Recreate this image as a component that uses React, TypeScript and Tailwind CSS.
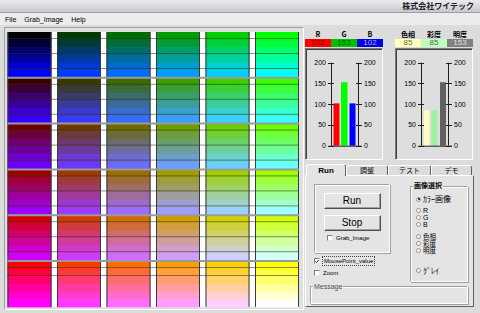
import React from "react";

const LAT = '"Liberation Sans", "Noto Sans CJK JP", sans-serif';
const JP = '"Noto Sans CJK JP", "Liberation Sans", sans-serif';

const L = [0, 58, 108, 158, 208, 255];

function ColorGrid() {
  const cellW = 44;
  const px = 49.5;
  const x0 = 2.5;
  const y0 = 4;
  const rh = 45.8;
  const bh = rh / 6;
  const gridRight = x0 + 5 * px + cellW;
  const rects: React.ReactNode[] = [];
  for (let c = 0; c < 5; c++) {
    rects.push(
      <rect key={`g${c}`} x={x0 + c * px + cellW} y={y0} width={px - cellW} height={rh * 6} fill="#ffffff" />
    );
  }
  for (let r = 0; r < 6; r++) {
    for (let c = 0; c < 6; c++) {
      for (let b = 0; b < 6; b++) {
        rects.push(
          <rect
            key={`c${r}-${c}-${b}`}
            x={x0 + c * px}
            y={y0 + r * rh + b * bh}
            width={cellW}
            height={bh + 0.6}
            fill={`rgb(${L[r]},${L[c]},${L[b]})`}
          />
        );
      }
    }
  }
  const lines: React.ReactNode[] = [];
  for (let c = 0; c < 6; c++) {
    lines.push(
      <line key={`vl${c}`} x1={x0 + c * px + 0.5} x2={x0 + c * px + 0.5} y1={y0} y2={y0 + rh * 6} stroke="#3a3a3a" strokeWidth={1} />
    );
    lines.push(
      <line key={`vr${c}`} x1={x0 + c * px + cellW - 0.5} x2={x0 + c * px + cellW - 0.5} y1={y0} y2={y0 + rh * 6} stroke="#3a3a3a" strokeWidth={1} />
    );
  }
  for (let r = 0; r < 6; r++) {
    const offs = r === 5 ? [6.5, 14.5] : [6.5, 21.5, 36.5];
    offs.forEach((o, i) => {
      lines.push(
        <line key={`s${r}-${i}`} x1={x0} x2={gridRight} y1={y0 + r * rh + o} y2={y0 + r * rh + o} stroke="rgba(50,50,50,0.55)" strokeWidth={1} />
      );
    });
    if (r > 0) {
      lines.push(
        <line key={`rd${r}`} x1={x0} x2={gridRight} y1={y0 + r * rh} y2={y0 + r * rh} stroke="#9a9a9a" strokeWidth={2} />
      );
    }
  }
  return (
    <svg width={298} height={281} className="block">
      {rects}
      {lines}
    </svg>
  );
}

type Bar = { x: number; w: number; v: number; color: string };

function Chart({ bars }: { bars: Bar[] }) {
  const y = (v: number) => 96.7 - v * 0.415;
  const levels = [0, 50, 100, 150, 200];
  return (
    <svg width={76} height={110} className="block">
      {bars.map((b, i) => (
        <rect key={i} x={b.x} y={y(b.v)} width={b.w} height={y(0) - y(b.v)} fill={b.color} />
      ))}
      <line x1={25.5} x2={25.5} y1={y(200)} y2={y(0)} stroke="#202020" />
      <line x1={52.5} x2={52.5} y1={y(200)} y2={y(0)} stroke="#202020" />
      <line x1={23} x2={56} y1={y(0) + 0.5} y2={y(0) + 0.5} stroke="#202020" />
      {levels.map((v) => (
        <g key={v}>
          <line x1={22} x2={28} y1={Math.round(y(v)) + 0.5} y2={Math.round(y(v)) + 0.5} stroke="#202020" />
          <line x1={50} x2={56} y1={Math.round(y(v)) + 0.5} y2={Math.round(y(v)) + 0.5} stroke="#202020" />
          <text x={20} y={y(v) + 2.5} fontSize={7} textAnchor="end" fill="#000" style={{ fontFamily: LAT }}>
            {v}
          </text>
          <text x={58} y={y(v) + 2.5} fontSize={7} fill="#000" style={{ fontFamily: LAT }}>
            {v}
          </text>
        </g>
      ))}
    </svg>
  );
}

function ValuePanel({
  labels,
  boxes,
  bars,
}: {
  labels: string[];
  boxes: { bg: string; fg: string; text: string }[];
  bars: Bar[];
}) {
  return (
    <div className="flex flex-col w-[78px]">
      <div className="flex h-[10px] items-center">
        {labels.map((l) => (
          <div key={l} className="flex-1 text-center text-[7px] font-bold leading-none text-black" style={{ fontFamily: JP }}>
            {l}
          </div>
        ))}
      </div>
      <div className="flex h-[8px]">
        {boxes.map((b, i) => (
          <div
            key={i}
            className="flex-1 flex items-center justify-center text-[8px] leading-none"
            style={{ backgroundColor: b.bg, color: b.fg, fontFamily: LAT }}
          >
            {b.text}
          </div>
        ))}
      </div>
      <div className="mt-[1px] h-[112px] border border-t-[#7a7a7a] border-l-[#7a7a7a] border-r-[#ffffff] border-b-[#ffffff] bg-[#dedede] shadow-[inset_1px_1px_0_#404040]">
        <Chart bars={bars} />
      </div>
    </div>
  );
}

function Check({ checked, label, focus }: { checked?: boolean; label: string; focus?: boolean }) {
  return (
    <div className="flex items-center h-[10px]">
      <div className="w-[6px] h-[6px] bg-white border border-t-[#808080] border-l-[#808080] border-r-[#e8e8e8] border-b-[#e8e8e8] flex items-center justify-center">
        {checked && (
          <svg width={5} height={5} viewBox="0 0 5 5" className="block">
            <path d="M0.5 2.3 L2 3.8 L4.6 0.8" stroke="#000" strokeWidth={1.1} fill="none" />
          </svg>
        )}
      </div>
      <span
        className={`ml-[2px] text-[6px] leading-none text-black px-[1px] py-[1px] ${focus ? "border border-dotted border-[#404040]" : ""}`}
        style={{ fontFamily: LAT }}
      >
        {label}
      </span>
    </div>
  );
}

function Radio({ checked, label, jp, h, size }: { checked?: boolean; label: string; jp?: boolean; h: string; size?: string }) {
  return (
    <div className={`flex items-center ${h}`}>
      <div className="w-[5px] h-[5px] rounded-full bg-white border border-[#909090] flex items-center justify-center">
        {checked && <div className="w-[2px] h-[2px] rounded-full bg-black" />}
      </div>
      <span
        className={`ml-[2px] leading-none text-black ${size ?? "text-[7px]"}`}
        style={{ fontFamily: jp ? JP : LAT }}
      >
        {label}
      </span>
    </div>
  );
}

function Btn({ label }: { label: string }) {
  return (
    <div className="w-[57px] h-[16px] bg-[#e4e4e4] border border-t-white border-l-white border-r-[#505050] border-b-[#505050] shadow-[inset_-1px_-1px_0_#a0a0a0] flex items-center justify-center">
      <span className="text-[10px] leading-none text-black" style={{ fontFamily: LAT }}>
        {label}
      </span>
    </div>
  );
}

export default function App() {
  return (
    <div className="w-[480px] h-[313px] overflow-hidden bg-[#dcdcdc] flex flex-col" style={{ fontFamily: LAT }}>
      {/* title bar */}
      <div className="h-[12px] bg-gradient-to-b from-[#ececf0] to-[#c8c8d0] flex items-center justify-end pr-[6px]">
        <span className="text-[8px] font-bold leading-none text-[#202020]" style={{ fontFamily: JP }}>
          株式会社ワイテック
        </span>
      </div>
      <div className="h-[1px] bg-[#9c9ca4]" />
      {/* menu */}
      <div className="h-[12px] bg-[#ececec] flex items-center pl-[5px] gap-[8px] text-[7px] leading-none text-black">
        <span>File</span>
        <span>Grab_Image</span>
        <span>Help</span>
      </div>
      {/* body */}
      <div className="flex flex-1 min-h-0">
        <div className="ml-[4px] mt-[2px] w-[300px] h-[283px] border border-t-[#a0a0a0] border-l-[#a0a0a0] border-r-white border-b-white bg-[#e0e0e0]">
          <ColorGrid />
        </div>
        <div className="ml-[1px] w-[170px] flex flex-col">
          <div className="mt-[4px] flex gap-[12px]">
            <ValuePanel
              labels={["R", "G", "B"]}
              boxes={[
                { bg: "#ff0000", fg: "#900000", text: "102" },
                { bg: "#00c000", fg: "#006000", text: "153" },
                { bg: "#0000e0", fg: "#b0b0ff", text: "102" },
              ]}
              bars={[
                { x: 27.5, w: 6, v: 102, color: "#ff0000" },
                { x: 35, w: 6.5, v: 153, color: "#00ff00" },
                { x: 43.5, w: 6, v: 102, color: "#0000ff" },
              ]}
            />
            <ValuePanel
              labels={["色相", "彩度", "明度"]}
              boxes={[
                { bg: "#ffffc0", fg: "#707030", text: "85" },
                { bg: "#c0ffc0", fg: "#407040", text: "85" },
                { bg: "#808080", fg: "#e0e0e0", text: "153" },
              ]}
              bars={[
                { x: 28, w: 5.5, v: 85, color: "#ffffc0" },
                { x: 35.5, w: 6, v: 85, color: "#a0f0a0" },
                { x: 44, w: 6, v: 153, color: "#606060" },
              ]}
            />
          </div>
          {/* tabs */}
          <div className="mt-[3px] flex items-end h-[12px] pl-[1px]">
            <div className="w-[40px] h-[12px] bg-[#e4e4e4] border border-b-0 border-t-white border-l-white border-r-[#606060] rounded-t-[3px] flex items-center justify-center -mb-[1px] z-10 relative">
              <span className="text-[8px] font-bold leading-none text-black">Run</span>
            </div>
            <div className="w-[42px] h-[10px] bg-[#dcdcdc] border border-b-0 border-t-white border-l-white border-r-[#606060] rounded-t-[3px] flex items-center justify-center">
              <span className="text-[7px] leading-none text-black" style={{ fontFamily: JP }}>調整</span>
            </div>
            <div className="w-[43px] h-[10px] bg-[#dcdcdc] border border-b-0 border-t-white border-l-white border-r-[#606060] rounded-t-[3px] flex items-center justify-center">
              <span className="text-[7px] leading-none text-black" style={{ fontFamily: JP }}>テスト</span>
            </div>
            <div className="w-[41px] h-[10px] bg-[#dcdcdc] border border-b-0 border-t-white border-l-white border-r-[#606060] rounded-t-[3px] flex items-center justify-center">
              <span className="text-[7px] leading-none text-black" style={{ fontFamily: JP }}>デモ</span>
            </div>
          </div>
          <div className="w-[169px] h-[132px] bg-[#e4e4e4] border border-t-white border-l-white border-r-[#606060] border-b-[#606060] flex flex-col">
            <div className="flex">
              <div className="flex flex-col ml-[8px] mt-[8px] w-[86px]">
                <div className="w-[76px] h-[69px] border border-t-[#a0a0a0] border-l-[#a0a0a0] border-r-white border-b-white shadow-[inset_1px_1px_0_#ffffff,1px_1px_0_#a0a0a0] flex flex-col items-center pt-[8px]">
                  <Btn label="Run" />
                  <div className="mt-[6px]">
                    <Btn label="Stop" />
                  </div>
                  <div className="mt-[2px] ml-[4px] self-start pl-[8px]">
                    <Check label="Grab_Image" />
                  </div>
                </div>
                <div className="mt-[3px]">
                  <Check checked label="MousePoint_value" focus />
                </div>
                <div className="mt-[2px]">
                  <Check label="Zoom" />
                </div>
              </div>
              <div className="ml-[10px] mt-[10px] w-[58px] h-[96px] border border-t-[#a0a0a0] border-l-[#a0a0a0] border-r-white border-b-white shadow-[inset_1px_1px_0_#ffffff,1px_1px_0_#a0a0a0] relative pl-[5px] pt-[7px] flex flex-col">
                <span
                  className="absolute -top-[5px] left-[2px] px-[1px] bg-[#e4e4e4] text-[7px] font-bold leading-none text-black"
                  style={{ fontFamily: JP }}
                >
                  画像選択
                </span>
                <Radio checked label="ｶﾗｰ画像" jp h="h-[10px]" size="text-[8px]" />
                <div className="mt-[3px]">
                  <Radio label="R" h="h-[7px]" />
                  <Radio label="G" h="h-[7px]" />
                  <Radio label="B" h="h-[7px]" />
                </div>
                <div className="mt-[5px]">
                  <Radio label="色相" jp h="h-[7px]" size="text-[6.5px]" />
                  <Radio label="彩度" jp h="h-[7px]" size="text-[6.5px]" />
                  <Radio label="明度" jp h="h-[7px]" size="text-[6.5px]" />
                </div>
                <div className="mt-[13px]">
                  <Radio label="ｸﾞﾚｲ" jp h="h-[7px]" size="text-[8px]" />
                </div>
              </div>
            </div>
            <div className="ml-[4px] mt-[4px] w-[158px] h-[18px] border border-t-[#a0a0a0] border-l-[#a0a0a0] border-r-white border-b-white shadow-[inset_1px_1px_0_#ffffff,1px_1px_0_#a0a0a0] relative">
              <span className="absolute -top-[4px] left-[2px] px-[1px] bg-[#e4e4e4] text-[7px] leading-none text-[#505050]">
                Message
              </span>
            </div>
          </div>
        </div>
      </div>
    </div>
  );
}
